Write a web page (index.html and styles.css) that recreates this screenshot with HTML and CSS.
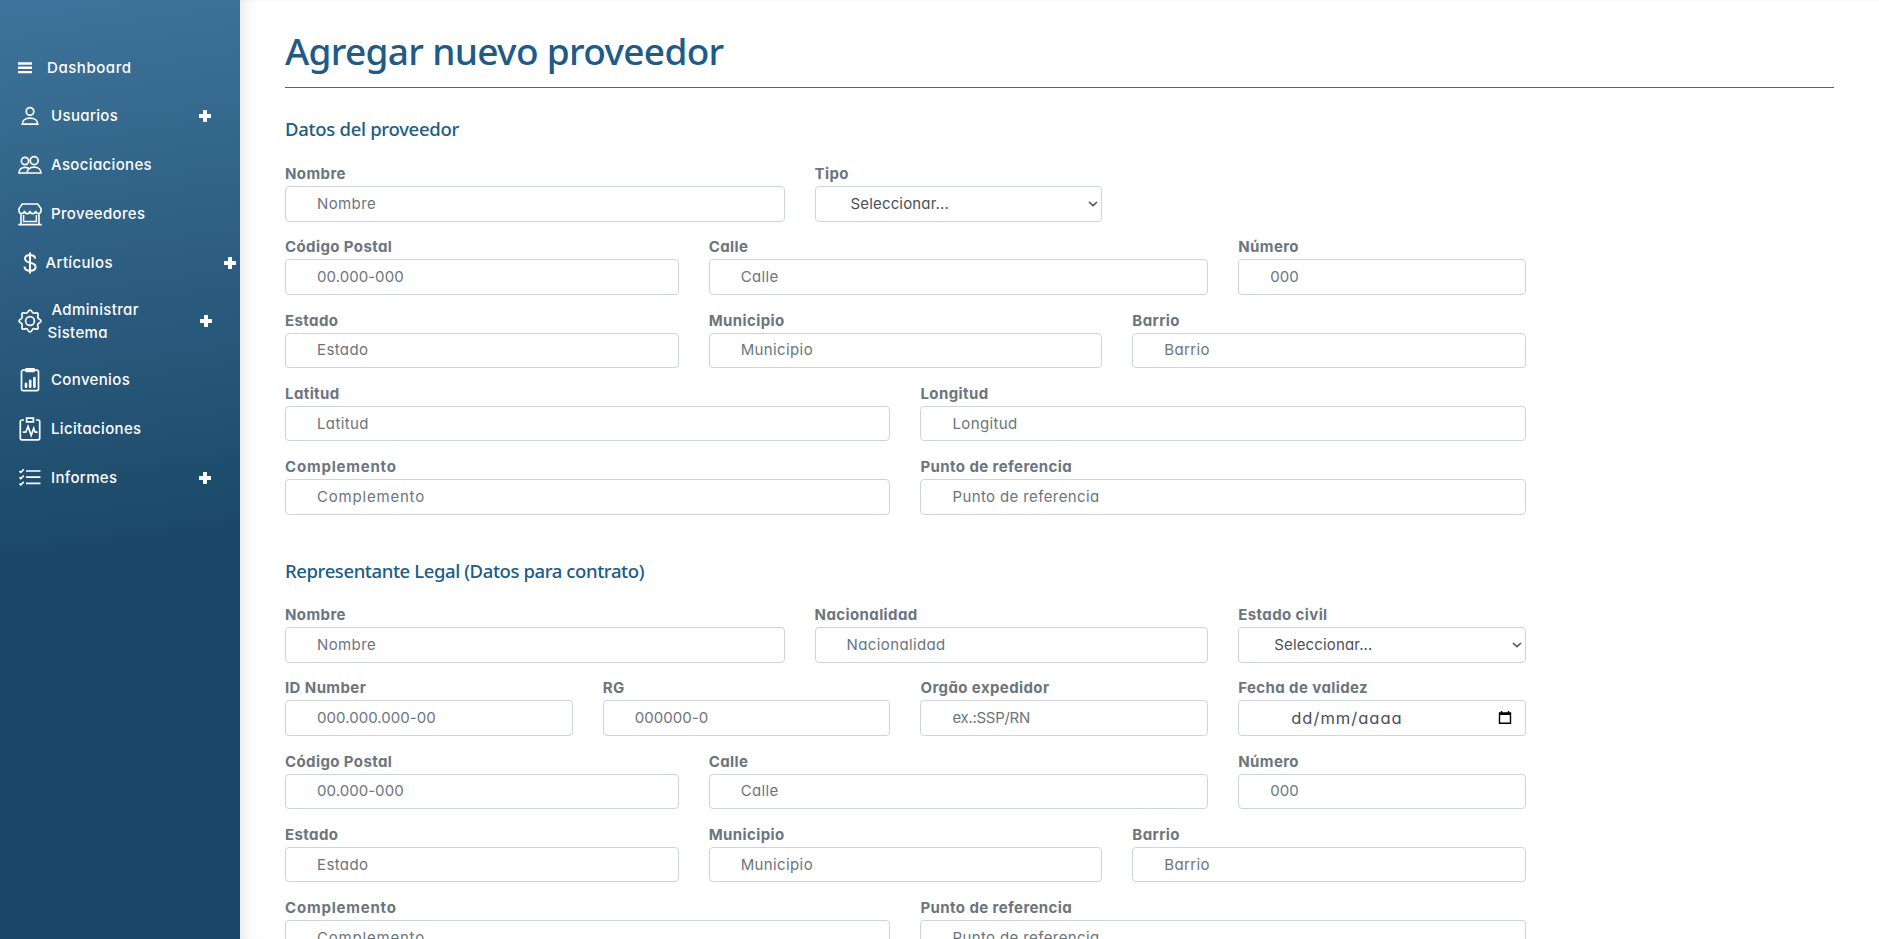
FILE: index.html
```html
<!DOCTYPE html>
<html lang="es">
<head>
<meta charset="utf-8">
<title>Agregar nuevo proveedor</title>
<link rel="stylesheet" href="styles.css">
</head>
<body>
<div class="layout">
  <nav class="sidebar">
    <a class="item item-first"><svg class="icon icon-bars" viewBox="0 0 14 12"><path d="M0 1.5h14M0 5.8h14M0 10.1h14" stroke-width="2.4"/></svg><span>Dashboard</span></a>
    <a class="item"><svg class="icon" viewBox="0 0 24 24"><circle cx="12" cy="7.4" r="3.8"/><path d="M4.2 20.2c0-3.6 3-6 7.8-6s7.8 2.4 7.8 6z"/></svg><span>Usuarios</span><svg class="plus" viewBox="0 0 12 12"><path d="M6 0v12M0 6h12"/></svg></a>
    <a class="item"><svg class="icon" viewBox="0 0 24 24"><circle cx="7" cy="8" r="3.6"/><circle cx="16.2" cy="7.6" r="4"/><path d="M9 20c0-3.500 2.800-5.800 7-5.800s7 2.300 7 5.800zM9.200 20H1c0-3.300 2.400-5.600 6-5.600 1.500 0 2.600.3 3.600.9"/></svg><span>Asociaciones</span></a>
    <a class="item"><svg class="icon" viewBox="0 0 24 24"><path d="M4.300 2h15.400L23 6.500v2.300a2.700 2.700 0 0 1-5.400 0 2.800 2.800 0 0 1-5.600 0 2.800 2.800 0 0 1-5.600 0A2.700 2.700 0 0 1 1 8.800V6.500zM3 11.500v11M21 11.500v11M.3 22.600h23.400" stroke-width="1.600"/><path d="M5.600 13v6.400h12.800V13" stroke-width="1.500"/></svg><span>Proveedores</span></a>
    <a class="item item-money"><svg class="icon" viewBox="0 0 24 24"><path d="M12 1.500v21M17.200 7.600c-.3-2.200-2.300-3.500-5.200-3.500s-5 1.500-5 3.700c0 5.300 10.600 2.600 10.600 8 0 2.400-2.200 4-5.400 4-3.300 0-5.500-1.400-5.800-4.100" stroke-width="2"/></svg><span>Artículos</span><svg class="plus" viewBox="0 0 12 12"><path d="M6 0v12M0 6h12"/></svg></a>
    <a class="item item-tall"><svg class="icon" viewBox="0 0 24 24"><circle cx="12" cy="12" r="4.400"/><path d="M9.930 2.950 Q12 -.9 14.070 2.950 Q14.900 4.600 16.930 4.140 Q21.200 2.800 19.860 7.070 Q19.300 9.100 21.050 9.930 Q24.900 12 21.050 14.070 Q19.300 14.900 19.860 16.930 Q21.200 21.200 16.930 19.860 Q14.900 19.300 14.070 21.050 Q12 24.900 9.930 21.050 Q9.100 19.300 7.070 19.860 Q2.800 21.200 4.140 16.930 Q4.600 14.900 2.950 14.070 Q-.9 12 2.950 9.930 Q4.600 9.100 4.140 7.070 Q2.800 2.800 7.070 4.140 Q9.100 4.600 9.930 2.950z"/></svg><span class="two-line">Administrar<br>Sistema</span><svg class="plus" viewBox="0 0 12 12"><path d="M6 0v12M0 6h12"/></svg></a>
    <a class="item"><svg class="icon" viewBox="0 0 24 24"><path d="M8 2.200H5.200A1.700 1.700 0 0 0 3.500 4v17c0 1 .7 1.600 1.700 1.600h13.600c1 0 1.700-.6 1.700-1.600V4c0-1-.7-1.800-1.700-1.800H16"/><path d="M8.200.9h7.600v2.400H8.200z" fill="#fff"/><path d="M8 15.800v3M12.200 12.800v6M16.400 10v8.800" stroke-width="2.600" stroke-linecap="round"/></svg><span>Convenios</span></a>
    <a class="item"><svg class="icon" viewBox="0 0 24 24"><path d="M6 3H4a1.700 1.700 0 0 0-1.700 1.700v16.500c0 .9.700 1.600 1.700 1.600h16c1 0 1.700-.7 1.700-1.600V4.700C21.700 3.700 21 3 20 3h-2M8.600 1.200h6.800v3.600H8.600z"/><path d="M4.800 15.200h2.900L10 9.500l3.200 9 2.500-7.200 1.400 3.900h2.500"/></svg><span>Licitaciones</span></a>
    <a class="item"><svg class="icon" viewBox="0 0 24 24"><path d="M8 5h14.500M8 11.200h14.500M8 17.400h14.500M1.500 5.200l1.300 1.200 3-3M1.500 11.400l1.300 1.200 3-3M1.500 17.600l1.300 1.200 3-3"/></svg><span>Informes</span><svg class="plus" viewBox="0 0 12 12"><path d="M6 0v12M0 6h12"/></svg></a>
  </nav>
  <main class="content">
    <h1 class="title">Agregar nuevo proveedor</h1>
    <form>
      <section class="section">
        <h2 class="subtitle">Datos del proveedor</h2>
        <div class="grid">
          <label class="field c5">Nombre<input placeholder="Nombre"></label>
          <label class="field c3">Tipo<span class="pick"><select><option>Seleccionar...</option></select><svg class="chevron" viewBox="0 0 10 6"><path d="M1 1l4 3.700L9 1"/></svg></span></label>
          <i class="c4"></i>
          <label class="field c4">Código Postal<input class="digits" placeholder="00.000-000"></label>
          <label class="field c5">Calle<input placeholder="Calle"></label>
          <label class="field c3">Número<input class="digits" placeholder="000"></label>
          <label class="field c4">Estado<input placeholder="Estado"></label>
          <label class="field c4">Municipio<input placeholder="Municipio"></label>
          <label class="field c4">Barrio<input placeholder="Barrio"></label>
          <label class="field c6">Latitud<input placeholder="Latitud"></label>
          <label class="field c6">Longitud<input placeholder="Longitud"></label>
          <label class="field c6 wide">Complemento<input placeholder="Complemento"></label>
          <label class="field c6">Punto de referencia<input placeholder="Punto de referencia"></label>
        </div>
      </section>
      <section class="section">
        <h2 class="subtitle subtitle-long">Representante Legal (Datos para contrato)</h2>
        <div class="grid">
          <label class="field c5">Nombre<input placeholder="Nombre"></label>
          <label class="field c4">Nacionalidad<input placeholder="Nacionalidad"></label>
          <label class="field c3">Estado civil<span class="pick"><select><option>Seleccionar...</option></select><svg class="chevron" viewBox="0 0 10 6"><path d="M1 1l4 3.700L9 1"/></svg></span></label>
          <label class="field c3">ID Number<input class="digits" placeholder="000.000.000-00"></label>
          <label class="field c3">RG<input class="digits" placeholder="000000-0"></label>
          <label class="field c3">Orgão expedidor<input class="short" placeholder="ex.:SSP/RN"></label>
          <label class="field c3">Fecha de validez<span class="pick"><input class="date" placeholder="dd/mm/aaaa"><svg class="calendar" viewBox="0 0 14 14"><path d="M1.500 2.500h11v10.300h-11zM1.500 3.700h11" stroke-width="1.400"/><path d="M3.500.4v2M10.500.4v2" stroke-width="1.400"/></svg></span></label>
          <label class="field c4">Código Postal<input class="digits" placeholder="00.000-000"></label>
          <label class="field c5">Calle<input placeholder="Calle"></label>
          <label class="field c3">Número<input class="digits" placeholder="000"></label>
          <label class="field c4">Estado<input placeholder="Estado"></label>
          <label class="field c4">Municipio<input placeholder="Municipio"></label>
          <label class="field c4">Barrio<input placeholder="Barrio"></label>
          <label class="field c6 wide">Complemento<input placeholder="Complemento"></label>
          <label class="field c6">Punto de referencia<input placeholder="Punto de referencia"></label>
        </div>
      </section>
    </form>
  </main>
</div>
</body>
</html>
```
FILE: styles.css
```css
* { box-sizing: border-box; }
body {
  margin: 0;
  font-family: Inter, sans-serif;
  font-size: 15px;
  font-feature-settings: "cv11";
  background: #fff;
}
.layout { display: flex; height: 939px; overflow: hidden; }

/* Sidebar */
.sidebar {
  flex: 0 0 240px;
  padding-top: 43px;
  background: linear-gradient(172deg, #3e749b 0%, #1b4868 58%);
}
.item {
  display: flex;
  align-items: center;
  height: 49px;
  padding: 0 29.5px 0 18.5px;
  color: #fff;
  font-weight: 450;
  letter-spacing: .35px;
}
.item span { margin-left: 9px; }
.icon {
  width: 24px;
  height: 24px;
  margin-left: -.5px;
  fill: none;
  stroke: #fff;
  stroke-width: 1.7;
}
.item-first { height: 48px; letter-spacing: .55px; }
.icon-bars { width: 14px; height: 12px; margin-top: 2px; }
.item-first span { margin-left: 15px; }
.item-money { padding-right: 4.5px; }
.item-money span { margin-left: 3.5px; }
.item-tall { height: 68px; padding-right: 28.5px; line-height: 23px; }
.item-tall .two-line { margin-left: 5.5px; text-indent: 4px; }
.plus {
  width: 12px;
  height: 12px;
  margin-left: auto;
  stroke: #fff;
  stroke-width: 4;
}

/* Main form */
.content {
  flex: 1;
  min-width: 0;
  padding: 29px 45px 0;
  box-shadow: inset 14px 0 16px -12px rgba(0, 0, 0, .12), inset 0 4px 5px -4px rgba(0, 0, 0, .04);
}
.title, .subtitle {
  margin: 0;
  color: #205b87;
  font-family: "Noto Sans", sans-serif;
  font-weight: 500;
}
.title {
  height: 59px;
  border-bottom: 1px solid #1a70d0;
  font-size: 37px;
  line-height: 44px;
  letter-spacing: -.68px;
}
.section { height: 441.500px; }
.subtitle {
  padding: 30px 0 22px;
  font-size: 18.5px;
  line-height: 22px;
  letter-spacing: -.3px;
}
.subtitle-long { padding-bottom: 21.500px; letter-spacing: -.4px; }
.grid {
  display: grid;
  grid-template-columns: repeat(12, 1fr);
  grid-auto-rows: 59.500px;
  gap: 13.750px 30px;
  width: 1241px;
}
.c3 { grid-column: span 3; }
.c4 { grid-column: span 4; }
.c5 { grid-column: span 5; }
.c6 { grid-column: span 6; }
.field {
  display: flex;
  flex-direction: column;
  color: #6c757d;
  font-weight: 700;
  line-height: 24px;
  letter-spacing: .4px;
}
.field input, .field select {
  width: 100%;
  height: 35.500px;
  padding: 0 12px 1px 31px;
  border: 1px solid #ced4da;
  border-radius: 4px;
  background: #fff;
  color: #495057;
  font: 400 15px Inter, sans-serif;
  font-feature-settings: "cv11";
  letter-spacing: .38px;
  appearance: none;
}
.field input::placeholder { color: #6c757d; opacity: 1; }
.wide, .wide input { letter-spacing: .8px; }
.field .digits { letter-spacing: .05px; }
.field .short { letter-spacing: -.3px; }
.field select { padding-left: 35px; letter-spacing: .15px; }
.field .date { padding-left: 52px; font-size: 16.500px; letter-spacing: 1px; }
.field .date::placeholder { color: #495057; }
.pick { position: relative; display: block; height: 35.500px; line-height: 0; }
.chevron {
  position: absolute;
  right: 4px;
  top: 15px;
  width: 10px;
  height: 6px;
  fill: none;
  stroke: #555;
  stroke-width: 1.6;
}
.calendar {
  position: absolute;
  right: 14px;
  top: 10px;
  width: 14px;
  height: 15px;
  fill: none;
  stroke: #000;
}
```
